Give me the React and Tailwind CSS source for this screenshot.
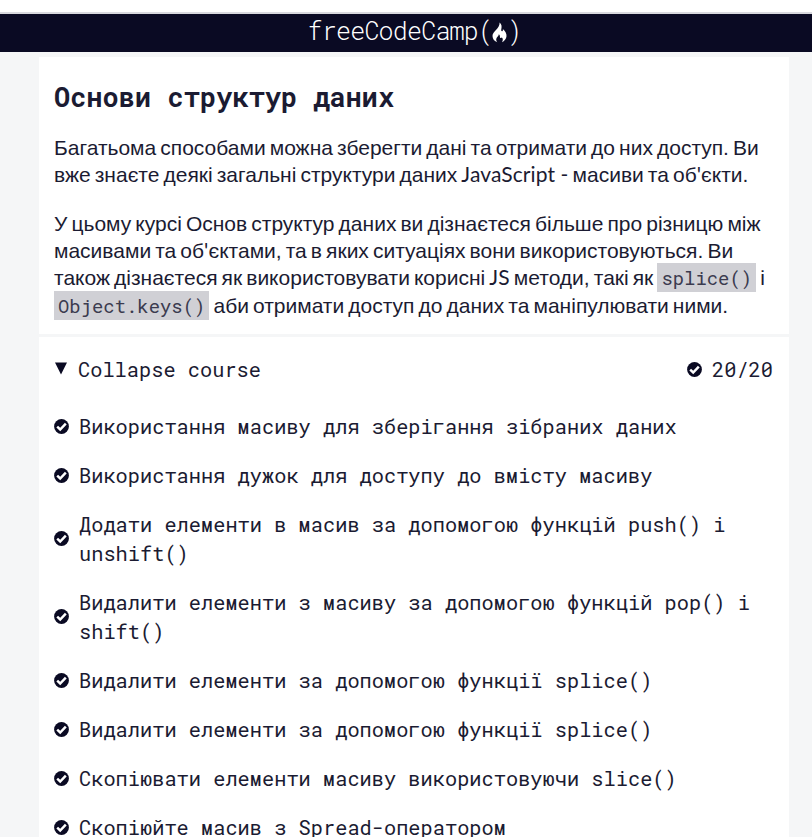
import React from "react";

const MONO = "font-['Roboto_Mono','DejaVu_Sans_Mono',monospace]";

const lessons = [
  ["Використання масиву для зберігання зібраних даних"],
  ["Використання дужок для доступу до вмісту масиву"],
  ["Додати елементи в масив за допомогою функцій push() і", "unshift()"],
  ["Видалити елементи з масиву за допомогою функцій pop() і", "shift()"],
  ["Видалити елементи за допомогою функції splice()"],
  ["Видалити елементи за допомогою функції splice()"],
  ["Скопіювати елементи масиву використовуючи slice()"],
  ["Скопіюйте масив з Spread-оператором"],
];

function Check({ className = "" }) {
  return (
    <svg className={"h-[15px] w-[15px] shrink-0 " + className} viewBox="0 0 15 15">
      <circle cx="7.5" cy="7.5" r="7.4" fill="#0a0a23" />
      <path d="M3.2 7.7 L6.2 10.5 L11.8 4.7" fill="none" stroke="#fff" strokeWidth="2.5" />
    </svg>
  );
}

function Flame() {
  return (
    <svg className="mb-px h-[21px] w-[15px] shrink-0" viewBox="0 0 15 21">
      <path
        fill="#fff"
        d="M7.6 0.6C9.8 2.2 9.9 5 9.3 7.2C8.9 8.9 9.8 9.6 10.6 8.9C11.1 8.4 11 7.6 10.8 7C13 8.8 14.8 11.4 14.5 14.2C14.2 17 12.4 19 10 20.3C11.2 18.3 11 16.4 9.8 15.5C9.1 16.4 7.8 16 7.9 14.7C8 13.6 7.6 12.8 6.8 12.2C6.8 14.4 4.2 15.2 4.2 17.5C4.2 18.6 4.7 19.6 5.4 20.3C2.5 19.3 0.5 17 0.5 14C0.5 9.5 8 6.6 7.6 0.6Z"
      />
    </svg>
  );
}

function L({ children }) {
  return <span className="font-[Lato] leading-none tracking-[0.1px] [word-spacing:0px]">{children}</span>;
}

function Line({ children, className = "" }) {
  return <span className={"block h-[27px] whitespace-nowrap " + className}>{children}</span>;
}

function Code({ children }) {
  return (
    <code className={"bg-[#d0d0d5] px-[4px] py-[2px] text-[18.9px] leading-none text-[#3b3b4f] " + MONO}>
      {children}
    </code>
  );
}

export default function App() {
  return (
    <div className="flex h-[837px] w-[812px] flex-col overflow-hidden bg-white text-[#1b1b32]">
      <div className="h-[12px] shrink-0" />
      <header
        className={
          "flex h-[40px] shrink-0 items-center justify-center border-t-2 border-[#d9d9de] bg-[#0a0a23] pl-[17px] text-[25px] leading-[34px] font-light text-white " +
          MONO
        }
      >
        <span className="mb-[4px] tracking-[-0.8px]">freeCodeCamp(</span>
        <Flame />
        <span className="mb-[4px] tracking-[-0.8px]">)</span>
      </header>
      <main className="min-h-0 grow bg-[#f5f6f7] pt-[5px] pr-[23px] pl-[39px]">
        <section className="h-[277px] bg-white px-[15px] pt-[21px]">
          <h1 className={"h-[38px] text-[27px] leading-[38px] font-bold whitespace-nowrap " + MONO}>Основи структур даних</h1>
          <div className="font-['Liberation_Sans',sans-serif] text-[21px] leading-[27px] [word-spacing:-1.76px]">
            <p className="mt-[18px]">
              <Line>Багатьома способами можна зберегти дані та отримати до них доступ. Ви</Line>
              <Line>вже знаєте деякі загальні структури даних <L>JavaScript -</L> масиви та об<L>'</L>єкти.</Line>
            </p>
            <p className="mt-[22px]">
              <Line>У цьому курсі Основ структур даних ви дізнаєтеся більше про різницю між</Line>
              <Line>масивами та об<L>'</L>єктами, та в яких ситуаціях вони використовуються. Ви</Line>
              <Line>також дізнаєтеся як використовувати корисні <L>JS</L> методи, такі як <Code>splice()</Code> і</Line>
              <Line className="mt-px"><Code>Object.keys()</Code> аби отримати доступ до даних та маніпулювати ними.</Line>
            </p>
          </div>
        </section>
        <section className={"mt-[3px] bg-white px-[15px] pt-[18px] text-[20.33px] leading-[29px] " + MONO}>
          <div className="flex h-[29px] items-center pr-px">
            <svg className="mr-[10px] mb-[2px] h-[13px] w-[14px]" viewBox="0 0 14 13">
              <path d="M1 0.5H13L7 12.5Z" fill="#0a0a23" />
            </svg>
            <span className="grow">Collapse course</span>
            <Check />
            <span className="ml-[10px]">20/20</span>
          </div>
          <ul className="mt-[28px] flex flex-col gap-[20px]">
            {lessons.map((lines, i) => (
              <li key={i} className="flex items-center gap-[10px]">
                <Check className={lines.length > 1 ? "mb-[2px]" : ""} />
                <span>
                  {lines.map((t) => (
                    <span key={t} className="block whitespace-nowrap">{t}</span>
                  ))}
                </span>
              </li>
            ))}
          </ul>
        </section>
      </main>
    </div>
  );
}
